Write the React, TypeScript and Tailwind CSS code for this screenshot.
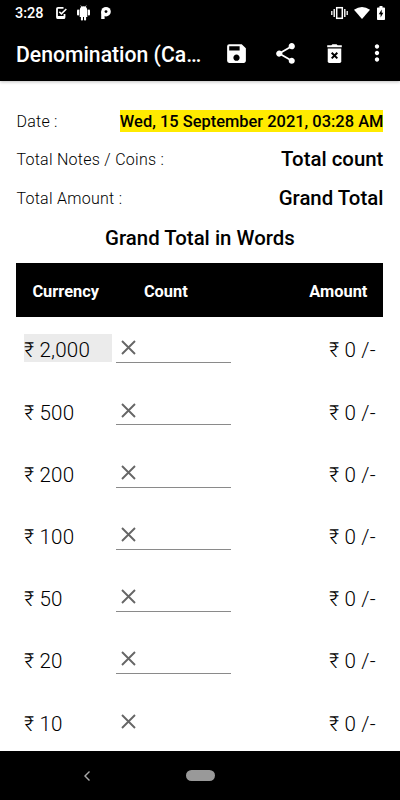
import { MdSave, MdShare, MdMoreVert } from 'react-icons/md';

const rows = [
  { id: 1, value: '2,000', selected: true },
  { id: 2, value: '500' },
  { id: 3, value: '200' },
  { id: 4, value: '100' },
  { id: 5, value: '50' },
  { id: 6, value: '20' },
  { id: 7, value: '10' },
];

function StatusBar() {
  return (
    <div className="flex h-[25px] items-center pl-[15px] pr-[15px]">
      <span className="w-[40px] text-[14.5px] font-medium leading-[25px] whitespace-nowrap">3:28</span>

      {/* Notifications */}
      <svg className="-mt-px" width="13" height="14" viewBox="0 0 13 14" fill="none">
        <path d="M8.5 1.8H3Q2 1.8 2 2.8V11.2Q2 12.2 3 12.2H8.5Q9.5 12.2 9.5 11.2V8" stroke="#fff" strokeWidth="1.8" />
        <path d="M2 11.2H9.5" stroke="#fff" strokeWidth="2.4" />
        <path d="M4.3 5.8L6.4 7.9L11.3 3" stroke="#fff" strokeWidth="1.6" />
      </svg>
      <svg className="-mt-px ml-[9px]" width="13" height="16" viewBox="0 0 13 16" fill="#fff">
        <path d="M2.7 5Q3 1.2 6.5 1.2T10.3 5V12H2.7Z" />
        <rect x="0" y="4.5" width="2.2" height="6" rx="1" />
        <rect x="10.8" y="4.5" width="2.2" height="6" rx="1" />
        <rect x="3.9" y="11" width="2.1" height="4.5" rx="0.8" />
        <rect x="7" y="11" width="2.1" height="4.5" rx="0.8" />
        <path d="M3.7 0.5L5 2.3M9.3 0.5L8 2.3" stroke="#fff" strokeWidth="0.7" />
      </svg>
      <svg className="-mt-px ml-[10px]" width="11" height="14" viewBox="0 0 11 14">
        <circle cx="6" cy="5.7" r="4.8" fill="#fff" />
        <path d="M1.2 5.5H4.6V13H1.2Z" fill="#fff" />
        <circle cx="6" cy="5.6" r="1.4" fill="#000" />
      </svg>

      {/* Device state */}
      <svg className="-mt-px ml-auto" width="17" height="14" viewBox="0 0 17 14" fill="none" stroke="#fff">
        <rect x="5.7" y="1.7" width="5.6" height="10.6" strokeWidth="1.5" />
        <path d="M3.2 3V11M13.8 3V11" strokeWidth="1.4" />
        <path d="M0.8 5V9M16.2 5V9" strokeWidth="1.3" />
      </svg>
      <svg className="-mt-px ml-[6px]" width="16" height="12" viewBox="0 0 16 12" fill="#fff">
        <path d="M0 2.8Q8 -2.6 16 2.8L8 12Z" />
      </svg>
      <svg className="-mt-px ml-[7px]" width="8" height="14" viewBox="0 0 8 14">
        <path d="M2.5 0H5.5V1.5H7.2Q8 1.5 8 2.3V13.2Q8 14 7.2 14H0.8Q0 14 0 13.2V2.3Q0 1.5 0.8 1.5H2.5Z" fill="#fff" />
        <path d="M4.7 3.5L1.8 8.2H3.6V11.5L6.3 6.8H4.7Z" fill="#000" />
      </svg>
    </div>
  );
}

function AppBar() {
  return (
    <div className="flex h-[56px] items-center pl-4">
      <h1 className="w-[204px] pt-px text-[21.2px] font-medium leading-[54px] whitespace-nowrap">
        Denomination (Ca…
      </h1>
      <div className="flex items-center pb-[2px] pl-[4px]">
        <button><MdSave size={25} /></button>
        <button className="ml-[24px]"><MdShare size={25} /></button>
        <button className="ml-[24px]">
          <svg width="25" height="25" viewBox="0 0 24 24" fill="#fff">
            <path d="M5.5 7.2H18.5V19.5Q18.5 21 17 21H7Q5.5 21 5.5 19.5Z" />
            <path d="M5 4H9L10 3H14L15 4H19V6H5Z" />
            <path d="M9.3 11.3L14.7 16.7M14.7 11.3L9.3 16.7" stroke="#000" strokeWidth="1.9" />
          </svg>
        </button>
        <button className="ml-[17px]"><MdMoreVert size={26} /></button>
      </div>
    </div>
  );
}

export default function App() {
  return (
    <div className="flex h-[800px] w-[400px] flex-col overflow-hidden bg-white font-['Roboto',sans-serif] text-black">
      <header className="z-10 h-[81px] shrink-0 bg-black pt-px text-white shadow-[0_1px_3px_rgba(0,0,0,0.25)]">
        <StatusBar />
        <AppBar />
      </header>

      <main className="min-h-0 flex-1 overflow-hidden pl-[16.4px] pr-[16.6px] pt-[29px]">
        {/* Summary */}
        <div className="flex h-[22px] items-center justify-between">
          <span className="pt-[2px] text-[16px] font-light tracking-[0.27px]">Date :</span>
          <span className="h-[22px] bg-[#ffeb00] text-[16.45px] font-medium leading-[23px] whitespace-nowrap">
            Wed, 15 September 2021, 03:28 AM
          </span>
        </div>
        <div className="mt-[15px] flex h-[24px] items-center justify-between">
          <span className="pt-px text-[16px] font-light tracking-[0.27px]">Total Notes / Coins :</span>
          <span className="text-[20.4px] font-medium">Total count</span>
        </div>
        <div className="mt-[15px] flex h-[25px] items-center justify-between">
          <span className="text-[16px] font-light tracking-[0.27px]">Total Amount :</span>
          <span className="text-[20.4px] font-medium">Grand Total</span>
        </div>
        <p className="mt-[15px] h-[26px] text-center text-[20.4px] font-medium leading-[25px]">Grand Total in Words</p>

        {/* Table header */}
        <div className="mt-[11px] flex h-[54px] items-center bg-black px-4 pt-[4px] text-[16.4px] font-bold text-white">
          <span className="w-[111.5px]">Currency</span>
          <span className="flex-1">Count</span>
          <span>Amount</span>
        </div>

        {/* Denominations */}
        <div className="px-[7.6px]">
          {rows.map((row, index) => (
            <div key={row.id} className="flex h-[62.2px] items-start pt-[17.4px] text-[20.6px] font-light leading-[32px] tracking-[0.2px]">
              <span className={row.selected ? 'h-[27.6px] w-[88px] bg-[#ebebeb]' : 'h-[27.6px] w-[88px]'}>
                ₹ {row.value}
              </span>
              <div
                className={
                  index < rows.length - 1
                    ? 'ml-[4px] flex h-[28.8px] w-[115px] border-b border-[#8a8a8a] pl-[5px] pt-[6px]'
                    : 'ml-[4px] flex h-[28.8px] w-[115px] pl-[5px] pt-[6px]'
                }
              >
                <svg width="15" height="15" viewBox="0 0 15 15" stroke="#666" strokeWidth="1.9">
                  <path d="M1 1L14 14M14 1L1 14" />
                </svg>
              </div>
              <span className="ml-auto">₹ 0 /-</span>
            </div>
          ))}
        </div>
      </main>

      <nav className="flex h-[49px] shrink-0 items-center bg-black">
        <svg className="ml-[84px]" width="6" height="10" viewBox="0 0 6 10" fill="none" stroke="#aaa" strokeWidth="1.4">
          <path d="M5.5 0.6L1 5L5.5 9.4" />
        </svg>
        <span className="ml-[96px] h-[11px] w-[29px] rounded-full bg-[#999]" />
      </nav>
    </div>
  );
}
